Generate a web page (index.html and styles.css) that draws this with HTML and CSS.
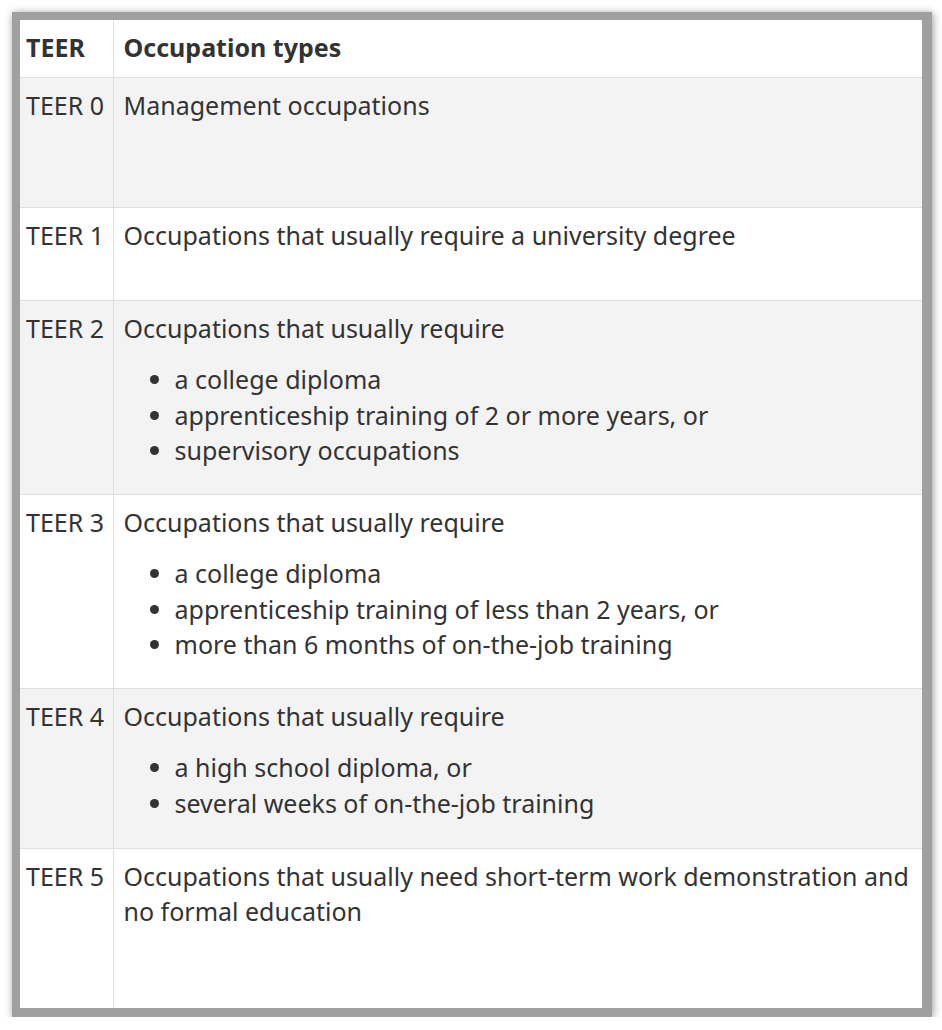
FILE: index.html
```html
<!DOCTYPE html>
<html lang="en">
<head>
<meta charset="utf-8">
<title>TEER categories</title>
<link rel="stylesheet" href="styles.css">
</head>
<body>
<div class="frame">
  <table class="teer">
    <thead>
      <tr class="r-head">
        <th class="c1">TEER</th>
        <th class="c2">Occupation types</th>
      </tr>
    </thead>
    <tbody>
      <tr class="r0 alt">
        <td class="c1">TEER 0</td>
        <td class="c2">Management occupations</td>
      </tr>
      <tr class="r1">
        <td class="c1">TEER 1</td>
        <td class="c2">Occupations that usually require a university degree</td>
      </tr>
      <tr class="r2 alt">
        <td class="c1">TEER 2</td>
        <td class="c2">
          <p>Occupations that usually require</p>
          <ul>
            <li>a college diploma</li>
            <li>apprenticeship training of 2 or more years, or</li>
            <li>supervisory occupations</li>
          </ul>
        </td>
      </tr>
      <tr class="r3">
        <td class="c1">TEER 3</td>
        <td class="c2">
          <p>Occupations that usually require</p>
          <ul>
            <li>a college diploma</li>
            <li>apprenticeship training of less than 2 years, or</li>
            <li>more than 6 months of on-the-job training</li>
          </ul>
        </td>
      </tr>
      <tr class="r4 alt">
        <td class="c1">TEER 4</td>
        <td class="c2">
          <p>Occupations that usually require</p>
          <ul>
            <li>a high school diploma, or</li>
            <li>several weeks of on-the-job training</li>
          </ul>
        </td>
      </tr>
      <tr class="r5">
        <td class="c1">TEER 5</td>
        <td class="c2">Occupations that usually need short-term work demonstration and no formal education</td>
      </tr>
    </tbody>
  </table>
</div>
</body>
</html>
```

FILE: styles.css
```css
html, body {
  margin: 0;
  padding: 0;
  background: #ffffff;
}

body {
  padding: 12px 0 0 12px;
  font-family: "Noto Sans", "Open Sans", sans-serif;
  color: #333333;
}

.frame {
  width: 902px;
  border: 8px solid #a0a0a0;
  border-right-width: 10px;
  border-bottom-width: 9px;
  background: #ffffff;
  box-shadow: 1px 1px 8px rgba(0, 0, 0, 0.4);
}

.teer {
  width: 902px;
  border-collapse: collapse;
  table-layout: fixed;
  font-size: 25px;
  line-height: 35.5px;
}

.teer th,
.teer td {
  text-align: left;
  vertical-align: top;
  padding: 10px 6px 0 10px;
  border: 1px solid #dfdfdf;
}

.teer thead th {
  border-top: none;
}

.teer tbody tr:last-child td {
  border-bottom: none;
}

.teer .c1 {
  width: 93px;
  box-sizing: border-box;
  padding-left: 6px;
  padding-right: 2px;
  border-left: none;
  white-space: nowrap;
}

.teer .c2 {
  border-right: none;
}

.teer th {
  font-weight: 700;
}

.alt {
  background: #f3f3f3;
}

.r-head { height: 57px; }
.r0 { height: 130px; }
.r1 { height: 93px; }
.r2 { height: 194px; }
.r3 { height: 194px; }
.r4 { height: 160px; }
.r5 { height: 160px; }

.teer p {
  margin: 0 0 16px 0;
}

.teer ul {
  margin: 0;
  padding-left: 51px;
}

.teer li {
  margin: 0;
}
```
